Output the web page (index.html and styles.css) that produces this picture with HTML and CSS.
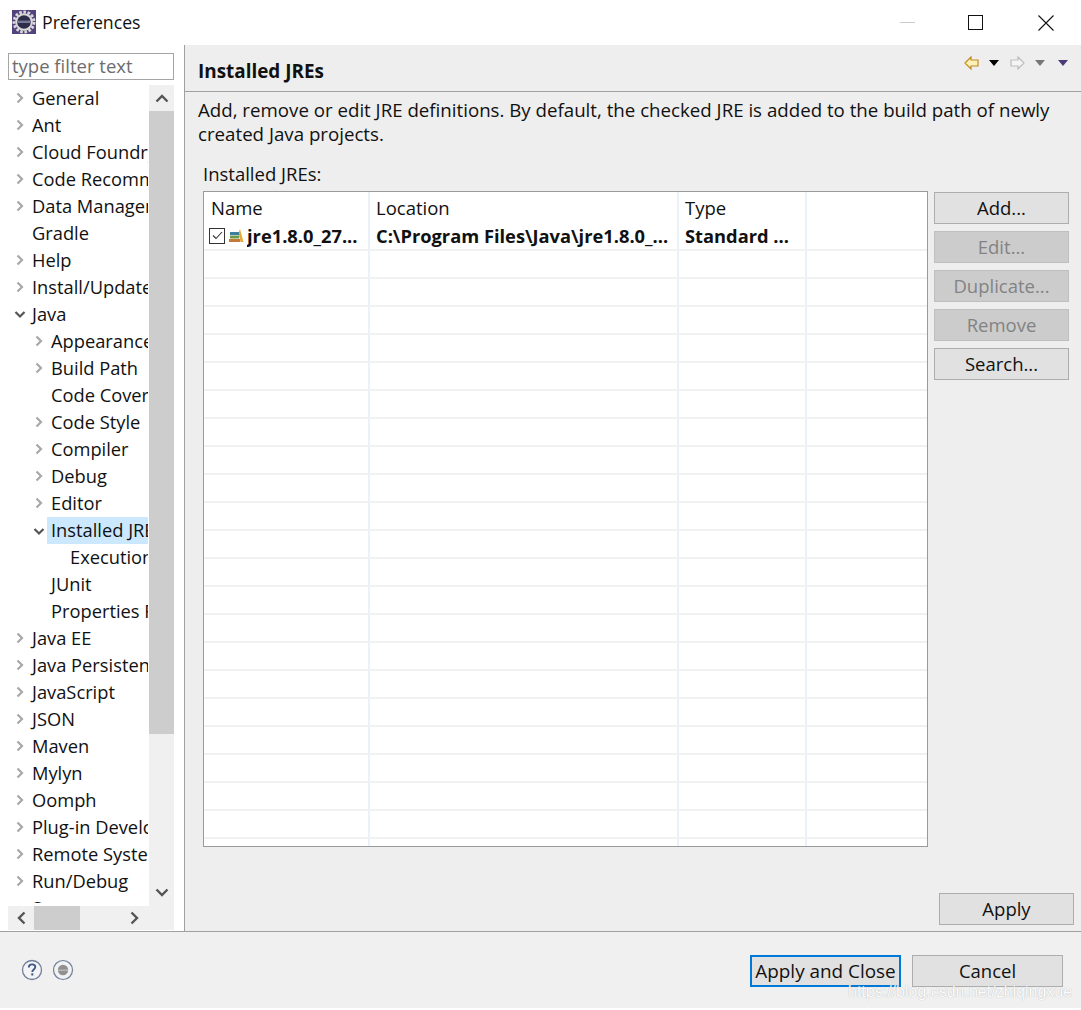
FILE: index.html
```html
<!DOCTYPE html>
<html lang="en">
<head>
<meta charset="utf-8">
<title>Preferences</title>
<link rel="stylesheet" href="styles.css">
</head>
<body>
<div class="window">
  <header class="titlebar">
    <svg class="app-icon" width="24" height="24" viewBox="0 0 24 24">
      <rect width="24" height="24" fill="#54427c"/>
      <circle cx="12" cy="12" r="10" fill="none" stroke="#d8d8d8" stroke-width="3" stroke-dasharray="2.600 1.600"/>
      <circle cx="12" cy="12" r="8.800" fill="#d9d9d9"/>
      <circle cx="12" cy="12" r="6.800" fill="#2f2c4a"/>
      <rect x="5.400" y="10.600" width="13.200" height="2.400" fill="#77779c"/>
    </svg>
    <span class="app-title">Preferences</span>
    <div class="win-controls">
      <span class="win-min"></span>
      <span class="win-max"></span>
      <svg class="win-close" width="16" height="16" viewBox="0 0 16 16"><path d="M.5.5l15 15M15.500.5l-15 15" stroke="#111" stroke-width="1.100" fill="none"/></svg>
    </div>
  </header>

  <main class="main">
    <aside class="sidebar">
      <div class="filter">type filter text</div>
      <div class="tree-area">
        <ul class="tree">
          <li class="node l0"><svg class="chev"><use href="#chev-r"/></svg>General</li>
          <li class="node l0"><svg class="chev"><use href="#chev-r"/></svg>Ant</li>
          <li class="node l0"><svg class="chev"><use href="#chev-r"/></svg>Cloud Foundry</li>
          <li class="node l0"><svg class="chev"><use href="#chev-r"/></svg>Code Recommenders</li>
          <li class="node l0"><svg class="chev"><use href="#chev-r"/></svg>Data Management</li>
          <li class="node l0"><span class="chev"></span>Gradle</li>
          <li class="node l0"><svg class="chev"><use href="#chev-r"/></svg>Help</li>
          <li class="node l0"><svg class="chev"><use href="#chev-r"/></svg>Install/Update</li>
          <li class="node l0"><svg class="chev"><use href="#chev-d"/></svg>Java</li>
          <li class="node l1"><svg class="chev"><use href="#chev-r"/></svg>Appearance</li>
          <li class="node l1"><svg class="chev"><use href="#chev-r"/></svg>Build Path</li>
          <li class="node l1"><span class="chev"></span>Code Coverage</li>
          <li class="node l1"><svg class="chev"><use href="#chev-r"/></svg>Code Style</li>
          <li class="node l1"><svg class="chev"><use href="#chev-r"/></svg>Compiler</li>
          <li class="node l1"><svg class="chev"><use href="#chev-r"/></svg>Debug</li>
          <li class="node l1"><svg class="chev"><use href="#chev-r"/></svg>Editor</li>
          <li class="node l1 node-sel"><svg class="chev"><use href="#chev-d"/></svg><span class="selected">Installed JREs</span></li>
          <li class="node l2"><span class="chev"></span>Execution Environments</li>
          <li class="node l1"><span class="chev"></span>JUnit</li>
          <li class="node l1"><span class="chev"></span>Properties Files Editor</li>
          <li class="node l0"><svg class="chev"><use href="#chev-r"/></svg>Java EE</li>
          <li class="node l0"><svg class="chev"><use href="#chev-r"/></svg>Java Persistence</li>
          <li class="node l0"><svg class="chev"><use href="#chev-r"/></svg>JavaScript</li>
          <li class="node l0"><svg class="chev"><use href="#chev-r"/></svg>JSON</li>
          <li class="node l0"><svg class="chev"><use href="#chev-r"/></svg>Maven</li>
          <li class="node l0"><svg class="chev"><use href="#chev-r"/></svg>Mylyn</li>
          <li class="node l0"><svg class="chev"><use href="#chev-r"/></svg>Oomph</li>
          <li class="node l0"><svg class="chev"><use href="#chev-r"/></svg>Plug-in Development</li>
          <li class="node l0"><svg class="chev"><use href="#chev-r"/></svg>Remote Systems</li>
          <li class="node l0"><svg class="chev"><use href="#chev-r"/></svg>Run/Debug</li>
          <li class="node l0"><svg class="chev"><use href="#chev-r"/></svg>Server</li>
        </ul>
        <div class="vscroll">
          <div class="vbtn"><svg width="14" height="9" viewBox="0 0 14 9"><path d="M1.500 7.500L7 2l5.500 5.500" fill="none" stroke="#555" stroke-width="2.400"/></svg></div>
          <div class="vthumb"></div>
          <div class="vtrack"><svg width="14" height="9" viewBox="0 0 14 9"><path d="M1.500 1.500L7 7l5.500-5.500" fill="none" stroke="#555" stroke-width="2.400"/></svg></div>
        </div>
      </div>
      <div class="hscroll">
        <div class="hbtn"><svg width="9" height="14" viewBox="0 0 9 14"><path d="M7.500 1.500L2 7l5.500 5.500" fill="none" stroke="#555" stroke-width="2.400"/></svg></div>
        <div class="hthumb"></div>
        <div class="hbtn hbtn-end"><svg width="9" height="14" viewBox="0 0 9 14"><path d="M1.500 1.500L7 7l-5.500 5.500" fill="none" stroke="#555" stroke-width="2.400"/></svg></div>
      </div>
    </aside>

    <section class="content">
      <div class="content-head">
        <h1 class="page-title">Installed JREs</h1>
        <div class="nav-tools">
          <svg class="nav-arrow" width="15" height="14" viewBox="0 0 15 14"><path d="M7 1L1 7l6 6V10h7V4H7z" fill="#fdf1b8" stroke="#c48a20" stroke-width="1.200"/></svg>
          <span class="tri tri-black"></span>
          <svg class="nav-arrow nav-next" width="15" height="14" viewBox="0 0 15 14"><path d="M8 1l6 6-6 6V10H1V4h7z" fill="#f4f4f4" stroke="#bdbdbd" stroke-width="1.200"/></svg>
          <span class="tri tri-grey"></span>
          <span class="tri tri-purple"></span>
        </div>
      </div>
      <div class="content-body">
        <p class="desc">Add, remove or edit JRE definitions. By default, the checked JRE is added to the build path of newly created Java projects.</p>
        <div class="label">Installed JREs:</div>
        <div class="jre-row">
          <div class="table">
            <div class="tcols">
              <div class="tcol c1"></div>
              <div class="tcol c2"></div>
              <div class="tcol c3"></div>
            </div>
            <div class="thead">
              <div class="cell c1">Name</div>
              <div class="cell c2">Location</div>
              <div class="cell c3">Type</div>
            </div>
            <div class="trow bold">
              <div class="cell c1 name-cell">
                <span class="check"><svg width="11" height="9" viewBox="0 0 11 9"><path d="M1 4.500L4 7.500 10 1" fill="none" stroke="#333" stroke-width="1.100"/></svg></span>
                <svg class="jre-icon" width="15" height="15" viewBox="0 0 15 15">
                  <path d="M11 1l3.500 13h-3L9.500 5z" fill="#e8a93a"/>
                  <rect x="1" y="4" width="9" height="3" fill="#3f7f9e"/>
                  <rect x="1" y="7.500" width="9" height="3" fill="#6d9a4a"/>
                  <rect x="0" y="11" width="11" height="3" fill="#c47b3a"/>
                </svg>
                <span class="ell">jre1.8.0_27...</span>
              </div>
              <div class="cell c2 ell">C:\Program Files\Java\jre1.8.0_...</div>
              <div class="cell c3 ell">Standard ...</div>
            </div>
            <div class="trow"></div><div class="trow"></div><div class="trow"></div><div class="trow"></div>
            <div class="trow"></div><div class="trow"></div><div class="trow"></div><div class="trow"></div>
            <div class="trow"></div><div class="trow"></div><div class="trow"></div><div class="trow"></div>
            <div class="trow"></div><div class="trow"></div><div class="trow"></div><div class="trow"></div>
            <div class="trow"></div><div class="trow"></div><div class="trow"></div><div class="trow"></div>
            <div class="trow"></div>
          </div>
          <div class="side-buttons">
            <button class="btn">Add...</button>
            <button class="btn disabled">Edit...</button>
            <button class="btn disabled">Duplicate...</button>
            <button class="btn disabled">Remove</button>
            <button class="btn">Search...</button>
          </div>
        </div>
        <div class="apply-row"><button class="btn btn-apply">Apply</button></div>
      </div>
    </section>
  </main>

  <footer class="footer">
    <svg class="help-icon" width="22" height="22" viewBox="0 0 22 22">
      <circle cx="11" cy="11" r="9.500" fill="#f4f4f6" stroke="#6f7f9c" stroke-width="1.300"/>
      <path d="M7.800 8.500c0-2 1.500-3.100 3.300-3.100s3.200 1 3.200 2.700c0 2.400-3 2.400-3 4.800" fill="none" stroke="#3f5a88" stroke-width="1.900"/>
      <rect x="10.300" y="14.300" width="2" height="2.200" fill="#3f5a88"/>
    </svg>
    <svg class="rec-icon" width="22" height="22" viewBox="0 0 22 22">
      <circle cx="11" cy="11" r="9.500" fill="#f2f2f2" stroke="#6f7f9c" stroke-width="1.200"/>
      <circle cx="11" cy="11" r="5.200" fill="#909090"/>
      <rect x="6" y="10.500" width="10" height="1.500" fill="#b5b5b5"/>
    </svg>
    <div class="footer-buttons">
      <button class="btn btn-primary">Apply and Close</button>
      <button class="btn btn-cancel">Cancel</button>
    </div>
    <span class="watermark">https://blog.csdn.net/zhiqingxue</span>
  </footer>
</div>

<svg class="defs" width="0" height="0">
  <defs>
    <symbol id="chev-r" viewBox="0 0 12 16"><path d="M3.500 3.500L8 8l-4.500 4.500" fill="none" stroke="#a8a8a8" stroke-width="2.200"/></symbol>
    <symbol id="chev-d" viewBox="0 0 12 16"><path d="M1.500 6L6 10.500 10.500 6" fill="none" stroke="#555" stroke-width="2.200"/></symbol>
  </defs>
</svg>
</body>
</html>
```
FILE: styles.css
```css
* { box-sizing: border-box; }
html, body { margin: 0; padding: 0; height: 100%; overflow: hidden; background: #fff; }
body { font-family: "Open Sans", "Noto Sans", sans-serif; font-size: 18.500px; color: #111; }
.defs { position: absolute; }
.window { display: flex; flex-direction: column; width: 1081px; height: 1008px; position: relative; }

.titlebar { height: 45px; background: #fff; display: flex; align-items: center; padding-left: 12px; flex: none; }
.app-icon { flex: none; margin-top: -2px; }
.app-title { margin-left: 6px; margin-top: -2px; font-size: 17.700px; }
.win-controls { margin-left: auto; display: flex; align-items: center; height: 100%; }
.win-min { width: 15px; height: 1px; background: #ccc; margin-right: 53px; }
.win-max { width: 15px; height: 15px; border: 1px solid #111; margin-right: 55px; }
.win-close { margin-right: 27px; }

.main { display: flex; height: 886px; flex: none; }
.sidebar { width: 185px; flex: none; background: #fff; border-right: 1px solid #a0a0a0; padding: 8px 10px 1px 8px; display: flex; flex-direction: column; }
.filter { height: 27px; line-height: 24px; border: 1px solid #a5a5a5; padding-left: 3px; color: #6d6d6d; flex: none; }
.tree-area { display: flex; height: 821px; margin-top: 5px; flex: none; }
.tree { list-style: none; margin: 0 0 0 -8px; padding: 0; width: 149px; height: 818px; overflow: hidden; flex: none; font-size: 18.300px; }
.node { height: 27px; line-height: 27px; white-space: nowrap; display: flex; align-items: center; overflow: hidden; padding-bottom: 2px; margin-right: 1px; }
.l0 { padding-left: 14px; }
.l1 { padding-left: 33px; }
.l2 { padding-left: 52px; }
.chev { width: 12px; height: 16px; flex: none; margin-right: 6px; display: block; }
.node-sel { padding-bottom: 0; }
.selected { background: #cce8ff; height: 27px; line-height: 25px; margin-left: -4px; padding-left: 4px; flex: 1; overflow: hidden; }

.vscroll { width: 25px; background: #f0f0f0; display: flex; flex-direction: column; flex: none; }
.vbtn { height: 26px; display: flex; align-items: center; justify-content: center; }
.vthumb { height: 623px; background: #cdcdcd; flex: none; }
.vtrack { flex: 1; display: flex; align-items: flex-end; justify-content: center; padding-bottom: 9px; }

.hscroll { height: 24px; background: #f0f0f0; display: flex; align-items: center; flex: none; }
.hbtn { width: 26px; display: flex; justify-content: center; }
.hthumb { width: 46px; height: 24px; background: #cdcdcd; }
.hbtn-end { margin-left: 41px; }

.content { flex: 1; background: #eee; display: flex; flex-direction: column; min-width: 0; }
.content-head { height: 47px; border-bottom: 1px solid #a0a0a0; display: flex; align-items: flex-start; padding-left: 13px; flex: none; }
.page-title { margin: 11px 0 0; font-size: 18.900px; font-weight: 700; line-height: 30px; }
.nav-tools { margin-left: auto; display: flex; align-items: center; height: 14px; margin-top: 11px; padding-right: 13px; }
.tri { width: 0; height: 0; border-left: 5.500px solid transparent; border-right: 5.500px solid transparent; border-top: 6px solid #000; }
.tri-black { margin-left: 10px; }
.nav-next { margin-left: 11px; }
.tri-grey { margin-left: 10px; border-top-color: #777; }
.tri-purple { margin-left: 13px; border-left-width: 5px; border-right-width: 5px; border-top-color: #4b3a7a; }

.content-body { padding: 6px 7px 0 13px; display: flex; flex-direction: column; flex: 1; }
.desc { margin: 0; line-height: 24px; width: 870px; font-size: 18.700px; }
.label { margin: 15px 0 0 5px; line-height: 26px; }
.jre-row { display: flex; margin: 4px 0 0 5px; align-items: flex-start; }

.table { width: 725px; height: 656px; background: #fff; border: 1px solid #9a9a9a; overflow: hidden; position: relative; flex: none; }
.tcols { position: absolute; inset: 0; display: flex; }
.tcol { border-right: 2px solid #eaf1f8; height: 100%; }
.tcol.c1, .cell.c1 { width: 166px; }
.tcol.c2, .cell.c2 { width: 309px; }
.tcol.c3, .cell.c3 { width: 128px; }
.thead, .trow { display: flex; position: relative; }
.thead { height: 31px; align-items: flex-start; padding-top: 2px; }
.thead .cell { line-height: 28px; padding-left: 6px; }
.thead .cell.c1 { padding-left: 7px; }
.trow { height: 28px; border-bottom: 2px solid #f1f1f1; align-items: center; }
.bold { font-weight: 700; font-size: 18.300px; padding-bottom: 1px; }
.trow .cell { padding-left: 6px; }
.ell { white-space: nowrap; overflow: hidden; }
.trow .name-cell { display: flex; align-items: center; padding-left: 5px; }
.check { width: 16px; height: 16px; border: 1px solid #333; display: flex; align-items: center; justify-content: center; flex: none; background: #fff; }
.jre-icon { flex: none; margin: 0 3px 0 4px; width: 15px; }

.side-buttons { display: flex; flex-direction: column; gap: 7px; margin-left: 6px; margin-top: 1px; }
.btn { font: inherit; color: #111; width: 135px; height: 32px; padding: 0; background: #e1e1e1; border: 1px solid #adadad; line-height: 28px; }
.btn.disabled { background: #ccc; border-color: #bfbfbf; color: #838383; }
.apply-row { display: flex; justify-content: flex-end; margin-top: 46px; }

.footer { flex: 1; background: #f0f0f0; border-top: 1px solid #a0a0a0; display: flex; align-items: flex-start; position: relative; padding-left: 21px; }
.help-icon { margin-top: 27px; flex: none; }
.rec-icon { margin: 27px 0 0 9px; flex: none; }
.footer-buttons { margin-left: auto; margin-right: 18px; margin-top: 23px; display: flex; gap: 11px; }
.btn-primary, .btn-cancel { width: 151px; }
.btn-primary { border: 2px solid #0078d7; font-size: 18.900px; }
.watermark { position: absolute; left: 848px; top: 51px; font-family: "Liberation Sans", sans-serif; font-size: 16px; color: #fff; opacity: .85; text-shadow: 0 0 1px #999; white-space: nowrap; }
```
